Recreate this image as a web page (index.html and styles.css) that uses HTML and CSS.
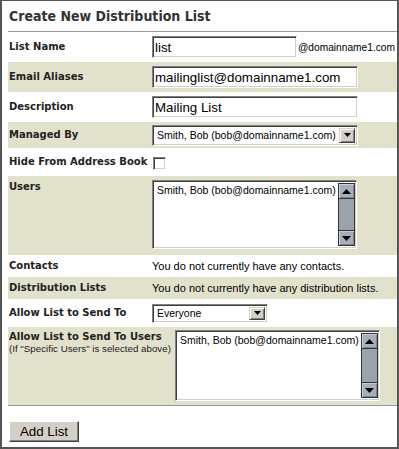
FILE: index.html
```html
<!DOCTYPE html>
<html>
<head>
<meta charset="utf-8">
<title>Create New Distribution List</title>
<link rel="stylesheet" href="styles.css">
</head>
<body>
<div class="frame">
  <h1 class="title">Create New Distribution List</h1>
  <div class="form">
    <div class="row r30">
      <div class="label">List Name</div>
      <div class="value"><input class="input w145" type="text" value="list"><span class="domain">@domainname1.com</span></div>
    </div>
    <div class="row r30 alt">
      <div class="label">Email Aliases</div>
      <div class="value"><input class="input w206" type="text" value="mailinglist@domainname1.com"></div>
    </div>
    <div class="row r30">
      <div class="label">Description</div>
      <div class="value"><input class="input w206" type="text" value="Mailing List"></div>
    </div>
    <div class="row r26 alt">
      <div class="label">Managed By</div>
      <div class="value">
        <div class="select w206">
          <span class="txt">Smith, Bob (bob@domainname1.com)</span>
          <span class="drop"><svg width="7" height="4" viewBox="0 0 7 4"><polygon points="0,0 7,0 3.5,4" fill="#000"/></svg></span>
        </div>
      </div>
    </div>
    <div class="row r28">
      <div class="label">Hide From Address Book</div>
      <div class="value"><input class="check" type="checkbox"></div>
    </div>
    <div class="row r79 alt top">
      <div class="label pt5">Users</div>
      <div class="value pt4">
        <div class="listbox">
          <div class="items">Smith, Bob (bob@domainname1.com)</div>
          <div class="scroll">
            <div class="sbtn up"><svg width="9" height="5" viewBox="0 0 9 5"><polygon points="4.5,0 9,5 0,5" fill="#000"/></svg></div>
            <div class="track"></div>
            <div class="sbtn down"><svg width="9" height="5" viewBox="0 0 9 5"><polygon points="0,0 9,0 4.5,5" fill="#000"/></svg></div>
          </div>
        </div>
      </div>
    </div>
    <div class="row r22">
      <div class="label">Contacts</div>
      <div class="value">You do not currently have any contacts.</div>
    </div>
    <div class="row r22 alt">
      <div class="label">Distribution Lists</div>
      <div class="value">You do not currently have any distribution lists.</div>
    </div>
    <div class="row r28">
      <div class="label">Allow List to Send To</div>
      <div class="value">
        <div class="select w116 h19">
          <span class="txt">Everyone</span>
          <span class="drop"><svg width="7" height="4" viewBox="0 0 7 4"><polygon points="0,0 7,0 3.5,4" fill="#000"/></svg></span>
        </div>
      </div>
    </div>
    <div class="row r78 alt top">
      <div class="label wide pt4">Allow List to Send To Users
        <div class="note">(If "Specific Users" is selected above)</div>
      </div>
      <div class="value pt3">
        <div class="listbox tall">
          <div class="items">Smith, Bob (bob@domainname1.com)</div>
          <div class="scroll">
            <div class="sbtn up"><svg width="9" height="5" viewBox="0 0 9 5"><polygon points="4.5,0 9,5 0,5" fill="#000"/></svg></div>
            <div class="track"></div>
            <div class="sbtn down"><svg width="9" height="5" viewBox="0 0 9 5"><polygon points="0,0 9,0 4.5,5" fill="#000"/></svg></div>
          </div>
        </div>
      </div>
    </div>
  </div>
  <div class="actions"><button class="btn" type="button">Add List</button></div>
</div>
</body>
</html>
```

FILE: styles.css
```css
* { box-sizing: border-box; }
html, body { margin: 0; padding: 0; background: #fff; }

.frame {
  width: 399px;
  height: 449px;
  border: 2px solid #555;
  border-top-width: 1px;
  padding-left: 6px;
  font-family: "DejaVu Sans", Verdana, sans-serif;
  color: #222;
  overflow: hidden;
}

.title {
  margin: 0;
  height: 31px;
  line-height: 30px;
  border-bottom: 1px solid #999;
  font-size: 14px;
  font-weight: bold;
  font-stretch: condensed;
  padding-left: 1px;
  color: #333;
  white-space: nowrap;
}

.form { border-bottom: 1px solid #999; }

.row { display: flex; align-items: center; }
.row.top { align-items: flex-start; }
.row.alt { background: #e2e2cc; }
.r30 { height: 30px; }
.r26 { height: 26px; }
.r28 { height: 28px; }
.r79 { height: 79px; }
.r22 { height: 22px; }
.r78 { height: 78px; }

.label {
  flex: none;
  width: 144px;
  padding-left: 1px;
  font-size: 10px;
  line-height: 12px;
  font-weight: bold;
  white-space: nowrap;
}
.label.wide { width: 167px; }
.pt3 { padding-top: 3px; }
.pt4 { padding-top: 4px; }
.pt5 { padding-top: 5px; }

.note {
  font-family: "Liberation Sans", Arial, sans-serif;
  font-size: 9.75px;
  font-weight: normal;
  line-height: 12px;
  color: #222;
}

.value {
  display: flex;
  align-items: center;
  font-family: "Liberation Sans", Arial, sans-serif;
  font-size: 11px;
  color: #000;
  white-space: nowrap;
}

.input {
  height: 22px;
  margin: 0;
  border: 1px solid;
  border-color: #808080 #fff #fff #808080;
  box-shadow: inset 1px 1px 0 #404040, inset -1px -1px 0 #d4d0c8;
  padding: 0 2px;
  font-family: "Liberation Sans", Arial, sans-serif;
  font-size: 13.33px;
  color: #000;
  background: #fff;
  outline: none;
}
.w145 { width: 145px; }
.w206 { width: 206px; }
.w116 { width: 116px; }

.domain { margin-left: 1px; font-size: 10.2px; }

.select {
  display: flex;
  align-items: center;
  height: 21px;
  border: 1px solid;
  border-color: #808080 #fff #fff #808080;
  box-shadow: inset 1px 1px 0 #404040, inset -1px -1px 0 #d4d0c8;
  background: #fff;
  padding: 2px;
  font-size: 10.5px;
}
.select.h19 { height: 19px; }
.select .txt { flex: 1; padding-left: 2px; overflow: hidden; }
.drop {
  flex: none;
  width: 16px;
  height: 100%;
  background: #d4d0c8;
  border: 1px solid;
  border-color: #d4d0c8 #404040 #404040 #d4d0c8;
  box-shadow: inset 1px 1px 0 #fff, inset -1px -1px 0 #808080;
  display: flex;
  align-items: center;
  justify-content: center;
}

.check {
  -webkit-appearance: none;
  appearance: none;
  width: 13px;
  height: 13px;
  margin: 3px 0 0 1px;
  border: 1px solid;
  border-color: #808080 #fff #fff #808080;
  box-shadow: inset 1px 1px 0 #404040, inset -1px -1px 0 #d4d0c8;
  background: #fff;
}

.listbox {
  display: flex;
  width: 205px;
  height: 69px;
  border: 1px solid;
  border-color: #808080 #fff #fff #808080;
  box-shadow: inset 1px 1px 0 #404040, inset -1px -1px 0 #d4d0c8;
  background: #fff;
  padding: 2px;
}
.listbox.tall { height: 71px; }
.items {
  flex: 1;
  padding: 1px 2px;
  font-size: 10.5px;
  line-height: 13px;
}
.scroll {
  flex: none;
  width: 17px;
  display: flex;
  flex-direction: column;
  background: #9aa2ac;
  border: 1px solid #333;
}
.sbtn {
  flex: none;
  height: 15px;
  background: #a6aeb9;
  box-shadow: inset 1px 1px 0 #c9cfd7, inset -1px -1px 0 #7c848e;
  display: flex;
  align-items: center;
  justify-content: center;
}
.sbtn.up { border-bottom: 1px solid #333; }
.sbtn.down { border-top: 1px solid #333; }
.track { flex: 1; }

.actions { padding-top: 15px; }
.btn {
  margin: 0 0 0 1px;
  width: 70px;
  height: 21px;
  padding: 0;
  background: #d4d0c8;
  border: 1px solid;
  border-color: #fff #404040 #404040 #fff;
  box-shadow: inset -1px -1px 0 #808080;
  font-family: "Liberation Sans", Arial, sans-serif;
  font-size: 13.33px;
  color: #000;
}
```
